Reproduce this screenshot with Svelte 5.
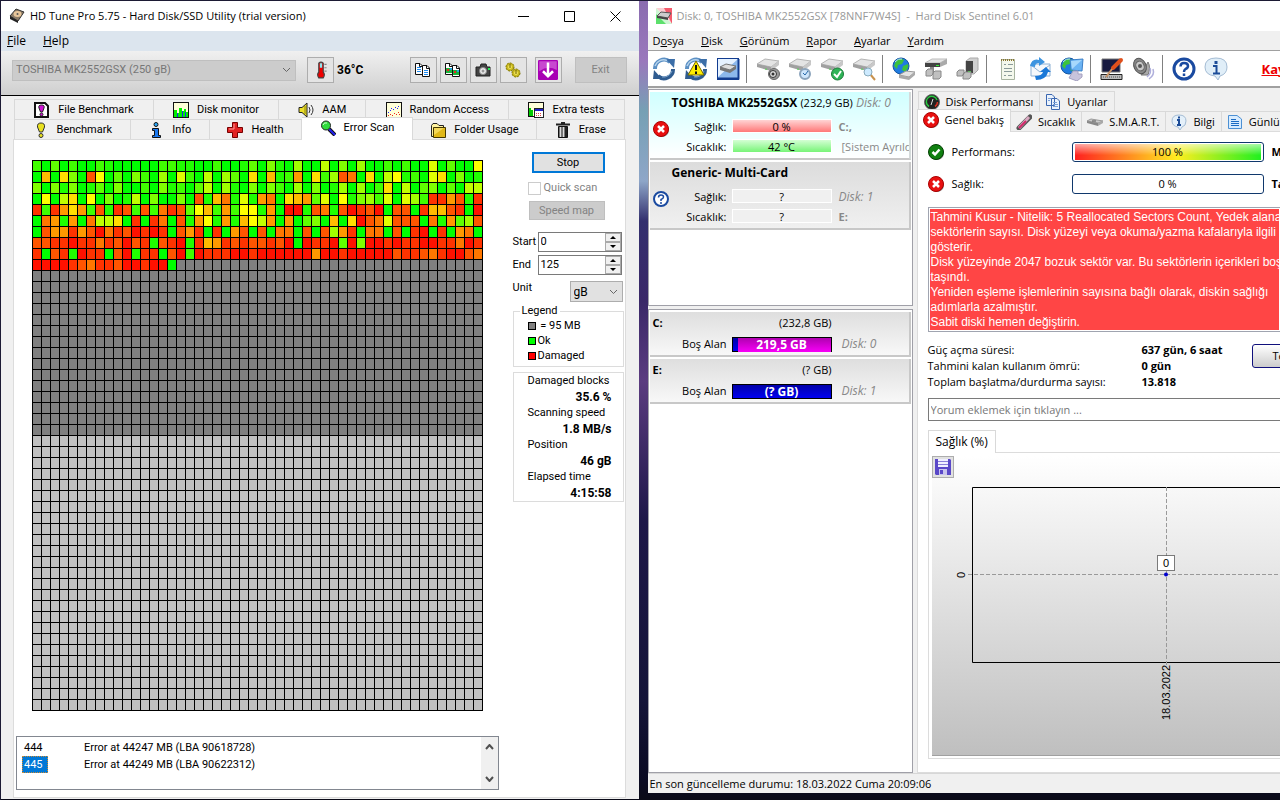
<script>
    // one hex digit per scanned block, 0 = fast (green), f = damaged (red)
    const scanRows = [
        '20302002100000221100200130410500604050020200703008',
        '0a0940d8030420507206053090a12b0925dc09068120790401',
        '40414013040020412036051040420504015050290603403066',
        '080690804016040040d1ac171bc09ab3708145270752eebd1e',
        'e2eb9b2d1ed2d2ced38a2b2881b0ff1dc1dfedf0dd0eaade0f',
        '0cb1b0c6690e0ec0d1b81b1a86b0b0340a09fdc7ddd0c1b35d',
        '0dbbebdfcedfefe0dbe0e0bd0d0cc0d0d5be0cc0d0ef0e0bc0',
        'ddeefeecedfde1def1eabededdedf0feef3f4ffefeeffeecfe',
        'e0de1fee0df1ee0df2feeeffeffffffbffefffffdeedceffdc',
        'ffffedceedffeff0'
    ];
    const COLS = 50;
    const ROWS = 50;

    function cellColor(row, col) {
        const level = scanRows[row] && scanRows[row][col];
        if (level) {
            const n = parseInt(level, 16);
            if (n <= 8) return `rgb(${Math.min(n * 32, 255)}, 255, 0)`;
            return `rgb(255, ${255 - (n - 8) * 34}, 0)`;
        }
        return row < 25 ? '#808080' : '#c0c0c0';
    }

    const cells = [];
    for (let row = 0; row < ROWS; row++) {
        for (let col = 0; col < COLS; col++) {
            cells.push({ x: col * 9 + 1, y: row * 11 + 1, fill: cellColor(row, col) });
        }
    }

    const tuneTabsTop = [
        { icon: 'filebench', label: 'File Benchmark' },
        { icon: 'monitor', label: 'Disk monitor' },
        { icon: 'speaker', label: 'AAM' },
        { icon: 'random', label: 'Random Access' },
        { icon: 'extra', label: 'Extra tests' }
    ];
    const tuneTabsBottom = [
        { icon: 'bench', label: 'Benchmark' },
        { icon: 'info', label: 'Info' },
        { icon: 'health', label: 'Health' },
        { icon: 'search', label: 'Error Scan' },
        { icon: 'folder', label: 'Folder Usage' },
        { icon: 'trash', label: 'Erase' }
    ];
    const tuneStats = [
        { label: 'Damaged blocks', value: '35.6 %' },
        { label: 'Scanning speed', value: '1.8 MB/s' },
        { label: 'Position', value: '46 gB' },
        { label: 'Elapsed time', value: '4:15:58' }
    ];
    const errors = [
        { id: 444, text: 'Error at 44247 MB (LBA 90618728)' },
        { id: 445, text: 'Error at 44249 MB (LBA 90622312)' }
    ];

    const menu = [
        ['D', 'o', 'sya'],
        ['', 'D', 'isk'],
        ['', 'G', 'örünüm'],
        ['', 'R', 'apor'],
        ['', 'A', 'yarlar'],
        ['', 'Y', 'ardım']
    ];
    const toolGroups = [
        ['refresh', 'refreshwarn', 'diskblue'],
        ['disksound', 'diskclock', 'diskcheck', 'disksearch'],
        ['globedisk', 'usb', 'usbup'],
        ['notepad', 'mail', 'network'],
        ['pen', 'horn'],
        ['help', 'bubble']
    ];
    const alertLines = [
        'Tahmini Kusur - Nitelik: 5 Reallocated Sectors Count, Yedek alana',
        'sektörlerin sayısı. Disk yüzeyi veya okuma/yazma kafalarıyla ilgili',
        'gösterir.',
        'Disk yüzeyinde 2047 bozuk sektör var. Bu sektörlerin içerikleri boş',
        'taşındı.',
        'Yeniden eşleme işlemlerinin sayısına bağlı olarak, diskin sağlığı',
        'adımlarla azalmıştır.',
        'Sabit diski hemen değiştirin.'
    ];

    let activeTuneTab = $state('Error Scan');
    let activeTab = $state('Genel bakış');
    let selectedError = $state(445);
    let start = $state(0);
    let end = $state(125);
</script>

{#snippet drive()}
    <path d="M1 7 L9 2 L23 4 L15 10 Z" fill="#e4e4e4" stroke="#b4b4b4" />
    <path d="M1 7 L15 10 V14 L1 10 Z" fill="#a0a0a0" />
    <path d="M15 10 L23 4 V8 L15 14 Z" fill="#c8c8c8" />
    <path d="M10 11.5 v1.5" stroke="#3d3" />
{/snippet}

{#snippet arrows()}
    <path d="M3 12 A9 9 0 0 1 18 5" fill="none" stroke="#5c90c4" stroke-width="4" />
    <path d="M14 2 L23 2 L22 11 Z" fill="#3b6ea8" />
    <path d="M21 12 A9 9 0 0 1 6 19" fill="none" stroke="#2f5c90" stroke-width="4" />
    <path d="M10 22 L1 22 L2 13 Z" fill="#2f5c90" />
    <path d="M3 9 A9 9 0 0 1 15 3.5" fill="none" stroke="#b8d4ec" stroke-width="1.5" />
    <path d="M20 14 A9 9 0 0 1 10 20" fill="none" stroke="#7ca4cc" />
{/snippet}

{#snippet globe()}
    <circle cx="9" cy="9" r="8" fill="#1f7be0" stroke="#1556a0" />
    <path d="M4 4 Q8 0 12 3 L10 7 L6 8 L5 12 L2 9 Z M11 9 L16 7 Q17 11 13 15 L10 13 Z" fill="#3cc23c" />
    <path d="M3 5 Q6 1 10 2" fill="none" stroke="#b8e4ff" />
{/snippet}

{#snippet icon(name, size = 16)}
    <svg class="icon" width={size} height={size} viewBox={size === 24 ? '0 0 24 24' : '0 0 16 16'} aria-hidden="true">
        {#if name === 'hdd'}
            <path d="M1 8 L7 1 L15 4 L9 13 Z" fill="#8a7a66" stroke="#333" />
            <path d="M1 8 L9 13 V15 L1 11 Z" fill="#222" />
            <ellipse cx="8.5" cy="6" rx="4" ry="3" fill="#e8c69a" />
            <circle cx="8.5" cy="6" r="1" fill="#555" />
        {:else if name === 'thermo'}
            <path d="M6 2 Q8 0 10 2 V10 Q12 12 10 15 H6 Q4 12 6 10 Z" fill="#e00" stroke="#444" />
            <path d="M7 2 H9 V6 H7 Z" fill="#8ee8f0" />
            <path d="M11 3 h2 M11 6 h2 M11 9 h2" stroke="#888" />
        {:else if name === 'copy' || name === 'copyimg'}
            <path d="M0.5 1.5 H5 L7.5 4 V12.5 H0.5 Z" fill="#fff" stroke="#111" />
            <path d="M7.5 3.5 H12 L14.5 6 V14.5 H7.5 Z" fill="#fff" stroke="#111" />
            <path d="M4.5 2 V4.500 H7 M11.5 4 V6.5 H14" fill="none" stroke="#111" />
            {#if name === 'copy'}
                <path d="M2 5.5 H6 M2 7.5 H6 M2 9.5 H6 M9 8.5 H13 M9 10.5 H13 M9 12.5 H13" stroke="#1e8bf0" />
            {:else}
                <path d="M1 6 H7 V11 H1 Z M8 8 H14 V13 H8 Z" fill="#18b33a" />
                <path d="M2 7 H4 V9 H2 Z M9 9 H11 V11 H9 Z" fill="#e22" />
                <path d="M5 6 H7 V8 H5 Z M12 8 H14 V10 H12 Z" fill="#2ad" />
            {/if}
        {:else if name === 'camera'}
            <path d="M1 5 H5 L6 2 H11 L12 5 H15 V14 H1 Z" fill="#444" stroke="#222" />
            <circle cx="8" cy="9" r="3.5" fill="#eee" stroke="#888" />
            <circle cx="8" cy="9" r="1.5" fill="#999" />
            <path d="M13 6 h2 v2 h-2 Z" fill="#2e5" />
        {:else if name === 'gears'}
            <circle cx="5" cy="5" r="4" fill="#c8b820" stroke="#7c7200" stroke-dasharray="2 1" />
            <circle cx="11" cy="11" r="4" fill="#c8b820" stroke="#7c7200" stroke-dasharray="2 1" />
            <circle cx="5" cy="5" r="2" fill="#f0e458" />
            <circle cx="11" cy="11" r="2" fill="#f0e458" />
            <path d="M5 2 V6 M11 8 V12" stroke="#6c6200" />
        {:else if name === 'down'}
            <rect width="16" height="16" rx="1" fill="#a800b4" />
            <path d="M1 1 H15 V8 Q8 4 1 9 Z" fill="#c848d0" />
            <path d="M8 2 V12 M4 9 L8 13 L12 9" fill="none" stroke="#fff" stroke-width="2" />
        {:else if name === 'filebench'}
            <path d="M1 1 H11 L14 4 V15 H1 Z" fill="#fff" stroke="#111" stroke-width="2" />
            <path d="M7.5 3 Q11 3 10 6 L8.5 10 H6.5 L5 6 Q4 3 7.5 3 Z" fill="#d010d8" stroke="#222" />
            <circle cx="7.5" cy="12.5" r="1.5" fill="#d010d8" stroke="#222" />
        {:else if name === 'monitor'}
            <rect x="0.5" y="0.5" width="15" height="15" fill="#ffffd8" stroke="#111" />
            <path d="M1 15 V8 H4 V11 H6 V6 H9 V9 H11 V7 H13 V10 H15 V15 Z" fill="#0e0" />
            <path d="M4 11 h1 v4 h-1 Z M9 9 h1 v6 h-1 Z M12 10 h1 v5 h-1 Z" fill="#22e" />
        {:else if name === 'speaker'}
            <path d="M1 5.5 H4 L9 1 V15 L4 10.5 H1 Z" fill="#ecdf28" stroke="#222" />
            <path d="M7 4 V12" stroke="#8c8410" />
            <path d="M11 5 Q13 8 11 11 M13 3 Q17 8 13 13" fill="none" stroke="#333" />
        {:else if name === 'random'}
            <rect x="0.5" y="0.5" width="15" height="15" fill="#ffffd8" stroke="#111" />
            <path d="M2 10.5 h1 M4 8.5 h1 M5 6.5 h1 M7 7.5 h1 M9 5.5 h1 M11 6.5 h1 M12 4.5 h1" stroke="#22f" />
            <path d="M2 13.5 h1 M4 12.5 h1 M6 13.5 h1 M8 11.5 h1 M10 12.5 h1 M12 10.5 h1 M13 12.5 h1" stroke="#e22" />
        {:else if name === 'extra'}
            <rect x="0.5" y="0.5" width="15" height="14" fill="#ffffd8" stroke="#111" />
            <path d="M1 14 V6 H3 V8 H5 V14 Z" fill="#0c0" />
            <rect x="6.5" y="6.5" width="9" height="9" fill="#fff" stroke="#222" />
            <path d="M7 8 H15" stroke="#22c" stroke-width="2" />
            <path d="M8 11.5 H14 M8 13.5 H14" stroke="#d44" stroke-dasharray="1 1" />
        {:else if name === 'bench'}
            <path d="M8 1 Q12 1 11.5 5 L9.500 10 H6.5 L4.5 5 Q4 1 8 1 Z" fill="#e8e020" stroke="#333" />
            <circle cx="8" cy="13.5" r="2" fill="#e8e020" stroke="#333" />
        {:else if name === 'info'}
            <circle cx="8" cy="2.5" r="2" fill="#2aa8f8" stroke="#111" />
            <path d="M4.5 6.5 H10.5 V13.5 H12.5 V15.5 H4.5 V13.5 H6.5 V8.5 H4.5 Z" fill="#1a78f0" stroke="#111" />
        {:else if name === 'health'}
            <path d="M5.5 0.5 H10.5 V5.5 H15.5 V10.5 H10.5 V15.5 H5.5 V10.5 H0.5 V5.5 H5.5 Z" fill="#e22424" stroke="#700" />
            <path d="M7 2 V7 H2" fill="none" stroke="#f99" />
        {:else if name === 'search'}
            <path d="M9 9 L15 15" stroke="#111" stroke-width="4" />
            <path d="M9 9 L15 15" stroke="#22e" stroke-width="2" />
            <circle cx="6" cy="5.5" r="4.5" fill="#2fdc3c" stroke="#222" />
            <path d="M3 5 Q4 2 7 3" fill="none" stroke="#cfc" />
        {:else if name === 'folder'}
            <path d="M1.5 3.5 L3 1.5 H7 L9 3.5 H13.5 V14.5 H1.5 Z" fill="#fff3a0" stroke="#222" />
            <path d="M3.5 5.5 H15.5 V15.5 H3.5 Z" fill="#e0b818" stroke="#443800" />
            <path d="M4 6 H14 L4 13 Z" fill="#f4d858" />
        {:else if name === 'trash'}
            <path d="M1 2.5 H15 M6 1 H10" stroke="#222" stroke-width="2" />
            <path d="M3.5 4.5 H12.5 V15.5 H3.5 Z" fill="#777" stroke="#111" />
            <path d="M5.5 5 V15 M8.5 5 V15" stroke="#ddd" />
            <path d="M11 5 V15" stroke="#222" stroke-width="2" />
        {:else if name === 'sentinel'}
            <path d="M0 0 H16 V16 Z" fill="#f45a6c" />
            <path d="M0 0 L16 16 H0 Z" fill="#5ce06c" />
            <path d="M0 0 H8 L16 16 H10 L0 6 Z" fill="#fff" opacity="0.7" />
            <path d="M1 8 L5 4 L15 5 L12 10 Z" fill="#ccc" stroke="#555" />
            <path d="M1 8 L12 10 V12 L1 10 Z" fill="#444" />
        {:else if name === 'refresh'}
            {@render arrows()}
        {:else if name === 'refreshwarn'}
            {@render arrows()}
            <path d="M12 4 L20 18 H4 Z" fill="#ffee00" stroke="#776a00" />
            <path d="M12 8 V13 M12 14.5 V17" stroke="#111" stroke-width="2" />
        {:else if name === 'diskblue'}
            <rect x="1.5" y="1.5" width="21" height="21" fill="#8cb8ec" stroke="#123c90" />
            <path d="M2 2 H22 L2 20 Z" fill="#e6f2ff" />
            <path d="M2 21.5 H22.5 V2" fill="none" stroke="#123c90" stroke-width="2" />
            <path d="M4 10 L10 7 L20 9 L14 13 Z" fill="#ddd" stroke="#777" />
            <path d="M4 10 L14 13 V16 L4 13 Z M14 13 L20 9 V12 L14 16 Z" fill="#777" />
        {:else if name === 'disksound'}
            {@render drive()}
            <circle cx="18" cy="17" r="5.5" fill="#999" stroke="#666" />
            <circle cx="17" cy="17" r="3.5" fill="#ddd" stroke="#333" />
            <circle cx="17" cy="17" r="1.5" fill="#333" />
        {:else if name === 'diskclock'}
            {@render drive()}
            <circle cx="17" cy="17" r="5" fill="#cfe6fb" stroke="#8ca4bc" stroke-width="2" />
            <path d="M20 14 L17 18 L15 16" fill="none" stroke="#2567a8" />
        {:else if name === 'diskcheck'}
            {@render drive()}
            <circle cx="17.5" cy="17" r="6" fill="#2fb457" stroke="#1a7a38" />
            <path d="M14 17 L17 20 L21 14" fill="none" stroke="#fff" stroke-width="2" />
        {:else if name === 'disksearch'}
            {@render drive()}
            <path d="M18 17 L23 23" stroke="#c8924e" stroke-width="2" />
            <circle cx="16" cy="15" r="4" fill="#cdeaff" stroke="#8ab" />
        {:else if name === 'globedisk'}
            {@render globe()}
            <path d="M7 18 L14 14 L23 15 L17 20 Z" fill="#e4e4e4" stroke="#999" />
            <path d="M7 18 L17 20 V23 L7 21 Z M17 20 L23 15 V18 L17 23 Z" fill="#aaa" />
        {:else if name === 'usb'}
            <path d="M1 6 L8 2 H23 L16 6 Z" fill="#e4e4e4" stroke="#bbb" />
            <path d="M1 6 H16 V10 H1 Z" fill="#444" />
            <path d="M16 6 L23 2 V7 L16 10 Z" fill="#aaa" />
            <path d="M12 8.5 h3" stroke="#3e3" />
            <path d="M6 10 H10 V15 H6 Z" fill="#888" />
            <path d="M2 14 L4 12 H9 V17 L7 19 H2 Z M9 16 L11 14 H17 V20 L15 22 H9 Z" fill="#c0c0c0" stroke="#888" />
        {:else if name === 'usbup'}
            <path d="M10 4 L14 1 H22 V13 L18 17 H10 Z" fill="#d0d0d0" stroke="#aaa" />
            <path d="M10 4 H17 V16 H10 Z" fill="#444" />
            <path d="M12 14.5 h3" stroke="#3e3" />
            <path d="M1 15 L3 13 H8 V17 L6 19 H1 Z M7 17 L9 15 H15 V20 L13 22 H7 Z" fill="#c0c0c0" stroke="#888" />
        {:else if name === 'notepad'}
            <path d="M5.5 2.5 H18.5 V22.5 H5.5 Z" fill="#f4f8ec" stroke="#a8b4a0" />
            <path d="M5 3 H19" stroke="#8a7430" stroke-width="2" stroke-dasharray="1 1" />
            <path d="M8 7.5 H10 M12 7.5 H17 M8 11.5 H16 M8 14.5 H16 M8 18.5 H10 M12 18.5 H16" stroke="#8a9a9a" />
        {:else if name === 'mail'}
            <path d="M3 7 H22 V19 H3 Z" fill="#f4f8fc" stroke="#8cb0d4" />
            <path d="M3 8 L12 15 L22 8" fill="none" stroke="#8cb0d4" />
            <path d="M2 9 Q4 1 11 3 V0 L17 5 L11 9 V6 Q7 6 7 10 Z" fill="#3c94e0" />
            <path d="M7 19 Q14 19 15 15 H12 L18 10 L23 15 H20 Q18 23 8 23 Z" fill="#1a78d8" />
        {:else if name === 'network'}
            {@render globe()}
            <path d="M10 3 L23 2 L22 14 L11 13 Z" fill="#6cb4f4" stroke="#3c80c8" />
            <path d="M11 4 L22 3 L12 12 Z" fill="#a8d8fc" />
            <path d="M13 14 h5 v3 h4 v3 L17 24 L9 21 Z" fill="#c8c4dc" stroke="#a4a0c0" />
        {:else if name === 'pen'}
            <path d="M2 2 H20 V15 H2 Z" fill="#171a40" stroke="#777" />
            <path d="M1 17.5 H22 V22.5 H1 Z" fill="#bbb" stroke="#222" />
            <path d="M3 20 H20" stroke="#555" stroke-dasharray="1 1" />
            <path d="M13 11 L21 3" stroke="#e0501c" stroke-width="4" stroke-linecap="round" />
            <path d="M6 20 L12 12" stroke="#c89468" stroke-width="2" />
        {:else if name === 'horn'}
            <path d="M9 18 L16 5 Q19 10 16 18 Z" fill="#aaa" stroke="#777" />
            <ellipse cx="8" cy="9" rx="6" ry="8" fill="#888" stroke="#555" transform="rotate(-25 8 9)" />
            <ellipse cx="8" cy="9" rx="4" ry="5" fill="#c8c8c8" stroke="#666" transform="rotate(-25 8 9)" />
            <circle cx="8" cy="9" r="2" fill="#555" />
            <path d="M18 11 Q20 16 15 20 M21 12 Q23 18 17 22" fill="none" stroke="#b0b0dc" stroke-width="1.5" />
        {:else if name === 'help'}
            <circle cx="12" cy="12" r="10" fill="#fff" stroke="#1a4aa0" stroke-width="3" />
            <path d="M8.5 9.5 Q8.5 6 12 6 Q16 6 16 9 Q16 11 13.5 12 Q12 13 12 15 M12 16.5 V19" fill="none" stroke="#1a4aa0" stroke-width="2.5" />
        {:else if name === 'bubble'}
            <path d="M12 1 Q23 1 23 10 Q23 17 16 19 L14 23 L11 19 Q1 18 1 10 Q1 1 12 1 Z" fill="#e0eef8" stroke="#a4bcd4" />
            <path d="M12 4 V7" stroke="#1c4c98" stroke-width="3" />
            <path d="M9 9 H12.5 V16 M9 16.5 H16" fill="none" stroke="#1c4c98" stroke-width="2" />
        {:else if name === 'bubble16'}
            <path d="M8 1 Q15 1 15 7 Q15 12 11 13 L9 16 L7 13 Q1 12 1 7 Q1 1 8 1 Z" fill="#e4f0fa" stroke="#a4bcd4" />
            <path d="M8 2.5 V4.5 M6 6 H8 V11 M6 11 H10" fill="none" stroke="#1c4c98" stroke-width="2" />
        {:else if name === 'gauge'}
            <circle cx="8" cy="8" r="7.5" fill="#222" stroke="#666" />
            <path d="M5 12.500 A5.500 5.500 0 1 1 13 6" fill="none" stroke="#28c840" stroke-width="1.5" />
            <path d="M13.500 8 A5.500 5.500 0 0 1 11 12.500" fill="none" stroke="#e03020" stroke-width="1.5" />
            <path d="M7 11 L9 5" stroke="#ddd" />
        {:else if name === 'pages'}
            <path d="M1.5 0.5 H7 L9.5 3 V11.5 H1.5 Z M6.5 4.5 H12 L14.5 7 V15.5 H6.5 Z" fill="#eaf2fc" stroke="#3a66b0" />
            <path d="M3 4.5 H6 M3 6.5 H5 M8 8.5 H12 M8 10.5 H13 M8 12.5 H13" stroke="#7aa0d8" />
        {:else if name === 'probe'}
            <path d="M3 14 L14 3" stroke="#555" stroke-width="5" stroke-linecap="round" />
            <path d="M3 14 L13 3" stroke="#d8a8c0" stroke-width="3" />
            <path d="M3 14 L10 7" stroke="#d02868" stroke-width="2" />
        {:else if name === 'smart'}
            <path d="M0 7 L4 5 L16 7 L11 9 Z" fill="#ccc" stroke="#999" />
            <path d="M0 7 L11 9 V12 L0 9 Z" fill="#888" />
            <path d="M11 9 L16 7 V9 L11 12 Z" fill="#aaa" />
            <path d="M5 7 h4" stroke="#555" />
        {:else if name === 'log'}
            <path d="M1.5 1.5 H10 L14.5 5 V14.5 H1.5 Z" fill="#d8ecff" stroke="#4c90d4" />
            <path d="M4 5.5 H9 M4 7.5 H12 M4 9.5 H12 M4 11.5 H12" stroke="#1c6cc4" />
        {:else if name === 'bad'}
            <circle cx="9" cy="9" r="7" fill="#888" />
            <circle cx="8" cy="8" r="7.5" fill="#e81010" stroke="#a00" />
            <path d="M5 5 L11 11 M11 5 L5 11" stroke="#fff" stroke-width="2.5" />
        {:else if name === 'good'}
            <circle cx="9" cy="9" r="7" fill="#888" />
            <circle cx="8" cy="8" r="7.5" fill="#108010" stroke="#044004" />
            <path d="M4.500 8 L7 10.5 L11.5 5.5" fill="none" stroke="#fff" stroke-width="2.5" />
        {:else if name === 'unknown'}
            <circle cx="8" cy="8" r="7" fill="#fff" stroke="#1a4aa0" stroke-width="2" />
            <path d="M5.5 6.5 Q5.5 4 8 4 Q10.5 4 10.5 6 Q10.5 7.5 8 8.5 V10 M8 11 V13" fill="none" stroke="#1a4aa0" stroke-width="1.5" />
        {:else if name === 'floppy'}
            <path d="M0 0 H15 L16 1 V16 H1 L0 15 Z" fill="#5a48c8" />
            <path d="M3 0 H13 V8 H3 Z" fill="#f0f0ff" />
            <path d="M3 2.5 H13 M3 5.5 H13" stroke="#8a80d8" />
            <path d="M4 10 H12 V16 H4 Z" fill="#c8c4ec" />
            <path d="M5 11 H8 V15 H5 Z" fill="#5a48c8" />
        {/if}
    </svg>
{/snippet}

{#snippet tuneTab(tab)}
    <button
        class="tab"
        class:active={tab.label === activeTuneTab}
        role="tab"
        aria-selected={tab.label === activeTuneTab}
        onclick={() => (activeTuneTab = tab.label)}
    >
        {@render icon(tab.icon)}
        <span>{tab.label}</span>
    </button>
{/snippet}

{#snippet sentTab(name, label)}
    <button
        class="tab"
        class:active={label === activeTab}
        role="tab"
        aria-selected={label === activeTab}
        onclick={() => (activeTab = label)}
    >
        {@render icon(name)}
        <span>{label}</span>
    </button>
{/snippet}

<div class="desktop">
    <section class="window tune">
        <header class="titlebar">
            {@render icon('hdd')}
            <h1>HD Tune Pro 5.75 - Hard Disk/SSD Utility (trial version)</h1>
            <div class="caption-buttons">
                <button aria-label="Minimize"><svg width="11" height="11"><path d="M0 5.5 H11" /></svg></button>
                <button aria-label="Maximize"><svg width="11" height="11"><path d="M0.5 0.5 H10.5 V10.5 H0.5 Z" /></svg></button>
                <button aria-label="Close"><svg width="11" height="11"><path d="M0.5 0.5 L10.5 10.5 M10.5 0.5 L0.5 10.5" /></svg></button>
            </div>
        </header>
        <nav class="menubar">
            <button><u>F</u>ile</button>
            <button><u>H</u>elp</button>
        </nav>
        <div class="tune-toolbar">
            <select class="drive-select" aria-label="Drive" disabled>
                <option>TOSHIBA MK2552GSX (250 gB)</option>
            </select>
            <button class="tool" aria-label="Temperature">{@render icon('thermo', 18)}</button>
            <strong class="temperature">36°C</strong>
            <div class="tools">
                <button class="tool" aria-label="Copy text">{@render icon('copy')}</button>
                <button class="tool" aria-label="Copy image">{@render icon('copyimg')}</button>
                <button class="tool" aria-label="Screenshot">{@render icon('camera')}</button>
                <button class="tool" aria-label="Options">{@render icon('gears')}</button>
                <button class="tool update" aria-label="Update">{@render icon('down', 20)}</button>
                <button class="exit" disabled>Exit</button>
            </div>
        </div>

        <div class="tune-body">
            <div class="tabs" role="tablist">
                {#each tuneTabsTop as tab}{@render tuneTab(tab)}{/each}
            </div>
            <div class="tabs" role="tablist">
                {#each tuneTabsBottom as tab}{@render tuneTab(tab)}{/each}
            </div>
            <div class="scan-page">
                <div class="scan-row">
                    <svg class="map" width="451" height="551" shape-rendering="crispEdges" role="img" aria-label="Block map">
                        <rect width="451" height="551" fill="#000" />
                        {#each cells as cell}
                            <rect x={cell.x} y={cell.y} width="8" height="10" fill={cell.fill} />
                        {/each}
                    </svg>
                    <div class="controls">
                        <button class="stop">Stop</button>
                        <label class="quick"><input type="checkbox" disabled /> Quick scan</label>
                        <button class="speed-map" disabled>Speed map</button>
                        <div class="range">
                            <label for="start">Start</label>
                            <span class="spin">
                                <input id="start" type="text" bind:value={start} />
                                <span class="steps">
                                    <button aria-label="Start up" onclick={() => start++}><i class="up"></i></button>
                                    <button aria-label="Start down" onclick={() => start--}><i class="down"></i></button>
                                </span>
                            </span>
                            <label for="end">End</label>
                            <span class="spin">
                                <input id="end" type="text" bind:value={end} />
                                <span class="steps">
                                    <button aria-label="End up" onclick={() => end++}><i class="up"></i></button>
                                    <button aria-label="End down" onclick={() => end--}><i class="down"></i></button>
                                </span>
                            </span>
                        </div>
                        <div class="unit">
                            <label for="unit">Unit</label>
                            <select id="unit"><option>gB</option></select>
                        </div>
                        <fieldset class="legend">
                            <legend>Legend</legend>
                            <div><i></i>&nbsp;= 95 MB</div>
                            <div><i class="ok"></i>Ok</div>
                            <div><i class="damaged"></i>Damaged</div>
                        </fieldset>
                        <dl class="stats">
                            {#each tuneStats as stat}
                                <dt>{stat.label}</dt>
                                <dd>{stat.value}</dd>
                            {/each}
                        </dl>
                    </div>
                </div>
                <div class="error-list">
                    <ul>
                        {#each errors as error}
                            <li>
                                <button class:selected={error.id === selectedError} onclick={() => (selectedError = error.id)}>{error.id}</button>
                                <span>{error.text}</span>
                            </li>
                        {/each}
                    </ul>
                    <div class="scrollbar">
                        <svg width="9" height="6"><path d="M1 5 L4.5 1 L8 5" /></svg>
                        <svg width="9" height="6"><path d="M1 1 L4.5 5 L8 1" /></svg>
                    </div>
                </div>
            </div>
        </div>
    </section>

    <section class="window sentinel">
        <header class="titlebar inactive">
            {@render icon('sentinel')}
            <h1>Disk: 0, TOSHIBA MK2552GSX [78NNF7W4S]&nbsp; -&nbsp; Hard Disk Sentinel 6.01</h1>
        </header>
        <nav class="menubar">
            {#each menu as [before, key, after]}
                <button>{before}<u>{key}</u>{after}</button>
            {/each}
        </nav>
        <div class="sent-toolbar">
            {#each toolGroups as group}
                <div class="tool-group">
                    {#each group as name}
                        <button aria-label={name}>{@render icon(name, 24)}</button>
                    {/each}
                </div>
            {/each}
            <a href="#register">Kayıt</a>
        </div>

        <div class="sent-body">
            <aside>
                <div class="list disks">
                    <article class="card current">
                        <h2>TOSHIBA MK2552GSX <span>(232,9 GB)</span> <em>Disk: 0</em></h2>
                        <div class="disk-info">
                            <span class="state">{@render icon('bad')}</span>
                            <span class="name">Sağlık:</span>
                            <span class="meter red">0 %</span>
                            <b>C:,</b>
                            <span class="name">Sıcaklık:</span>
                            <span class="meter green">42 °C</span>
                            <span class="note">[Sistem Ayrıldı]</span>
                        </div>
                    </article>
                    <article class="card">
                        <h2>Generic- Multi-Card</h2>
                        <div class="disk-info">
                            <span class="state">{@render icon('unknown')}</span>
                            <span class="name">Sağlık:</span>
                            <span class="meter">?</span>
                            <em>Disk: 1</em>
                            <span class="name">Sıcaklık:</span>
                            <span class="meter">?</span>
                            <b>E:</b>
                        </div>
                    </article>
                </div>
                <div class="list volumes">
                    <article class="card volume">
                        <div class="volume-head"><b>C:</b><span>(232,8 GB)</span></div>
                        <div class="volume-row">
                            <span class="name">Boş Alan</span>
                            <span class="space"><i style="width: 94%"></i><b>219,5 GB</b></span>
                            <em>Disk: 0</em>
                        </div>
                    </article>
                    <article class="card volume">
                        <div class="volume-head"><b>E:</b><span>(? GB)</span></div>
                        <div class="volume-row">
                            <span class="name">Boş Alan</span>
                            <span class="space"><i style="width: 0%"></i><b>(? GB)</b></span>
                            <em>Disk: 1</em>
                        </div>
                    </article>
                </div>
            </aside>

            <main>
                <div class="tabs" role="tablist">
                    {@render sentTab('gauge', 'Disk Performansı')}
                    {@render sentTab('pages', 'Uyarılar')}
                </div>
                <div class="tabs" role="tablist">
                    {@render sentTab('bad', 'Genel bakış')}
                    {@render sentTab('probe', 'Sıcaklık')}
                    {@render sentTab('smart', 'S.M.A.R.T.')}
                    {@render sentTab('bubble16', 'Bilgi')}
                    {@render sentTab('log', 'Günlük')}
                </div>
                <div class="overview">
                    <div class="rating">
                        {@render icon('good')}
                        <span>Performans:</span>
                        <span class="bar full">100 %</span>
                        <b>Maks.</b>
                    </div>
                    <div class="rating">
                        {@render icon('bad')}
                        <span>Sağlık:</span>
                        <span class="bar">0 %</span>
                        <b>Tahmini</b>
                    </div>
                    <div class="alert">
                        <div class="alert-text">
                            {#each alertLines as line}<p>{line}</p>{/each}
                        </div>
                    </div>
                    <div class="facts">
                        <dl>
                            <dt>Güç açma süresi:</dt><dd>637 gün, 6 saat</dd>
                            <dt>Tahmini kalan kullanım ömrü:</dt><dd>0 gün</dd>
                            <dt>Toplam başlatma/durdurma sayısı:</dt><dd>13.818</dd>
                        </dl>
                        <button>Tekrar</button>
                    </div>
                    <input class="comment" type="text" placeholder="Yorum eklemek için tıklayın ..." aria-label="Yorum" />
                    <div class="tabs chart-tabs" role="tablist">
                        <button class="tab active" role="tab" aria-selected="true">Sağlık (%)</button>
                    </div>
                    <div class="chart-page">
                        <div class="chart">
                            <button class="save" aria-label="Kaydet">{@render icon('floppy')}</button>
                            <svg class="plot" width="100%" height="277" role="img" aria-label="Sağlık (%)">
                                <path d="M2000 9.5 H40.5 V184.5 H2000" fill="none" stroke="#000" />
                                <path d="M234.5 9 V190 M36 96.5 H2000" stroke="#999" stroke-dasharray="4 2" />
                                <rect x="225.5" y="77.5" width="17" height="15" fill="#fff" stroke="#000" stroke-dasharray="1 1" />
                                <text x="234" y="89" text-anchor="middle">0</text>
                                <circle cx="234" cy="96.5" r="2" fill="#00c" />
                                <text transform="translate(33 97) rotate(-90)" text-anchor="middle">0</text>
                                <text transform="translate(238 242) rotate(-90)">18.03.2022</text>
                            </svg>
                        </div>
                    </div>
                </div>
            </main>
        </div>
        <footer>En son güncelleme durumu: 18.03.2022 Cuma 20:09:06</footer>
    </section>
</div>

<style>
    :global(body) {
        overflow: hidden;
        background: #0b0b20;
    }

    * {
        box-sizing: border-box;
    }

    button,
    input,
    select {
        font: inherit;
        color: inherit;
    }

    button {
        padding: 0;
        border: none;
        background: none;
    }

    .icon {
        flex: none;
        display: block;
    }

    .desktop {
        display: flex;
        align-items: flex-start;
        gap: 9px;
        min-height: 100vh;
        border: 1px solid #1c1a34;
        border-width: 1px 0 0 1px;
        background: linear-gradient(#8a6cb0 0, #9a78bc 60px, #76a0b4 110px, #8ea6c8 180px, #33306e 220px, #3a2868 300px, #5b3c80 380px, #1d1748 520px, #141438 700px, #0a0a22 780px, #0a0a18 100%);
    }

    .window {
        display: flex;
        flex-direction: column;
        min-width: 0;
        background: #f0f0f0;
        color: #000;
        font: 11px/16px "Open Sans", "Noto Sans", sans-serif;
        white-space: nowrap;
        overflow: hidden;
    }

    .tune {
        flex: 0 0 calc(50% - 2px);
    }

    .sentinel {
        flex: 1;
    }

    .titlebar {
        display: flex;
        align-items: center;
        gap: 5px;
        height: 30px;
        padding-left: 8px;
        background: #fff;
    }

    .titlebar h1 {
        margin: 0;
        font-size: 11px;
        font-weight: 400;
    }

    .titlebar.inactive {
        color: #999;
    }

    .caption-buttons {
        display: flex;
        margin-left: auto;
    }

    .caption-buttons button {
        display: grid;
        place-items: center;
        width: 46px;
        height: 30px;
    }

    .caption-buttons path {
        fill: none;
        stroke: #000;
    }

    .menubar {
        display: flex;
        gap: 17px;
        height: 20px;
    }

    .tune .menubar {
        padding-left: 6px;
        background: #dce5ee;
        font-size: 12px;
    }

    .sentinel .menubar {
        padding-left: 5px;
        border-bottom: 1px solid #a0a0a0;
    }

    /* HD Tune */

    .tune-toolbar {
        display: flex;
        align-items: center;
        height: 45px;
        padding: 0 12px 6px 11px;
        border-bottom: 1px solid #000;
        background: linear-gradient(#f0f0f0, #cfcfcf);
        font: 11px/14px Roboto, "Liberation Sans", sans-serif;
    }

    select {
        appearance: none;
        border: 1px solid #adadad;
        border-radius: 0;
        padding: 0 3px;
        background: #e1e1e1 url("data:image/svg+xml,%3Csvg xmlns='http://www.w3.org/2000/svg' width='9' height='6'%3E%3Cpath d='M1 1 L4.5 4.5 L8 1' fill='none' stroke='%23666'/%3E%3C/svg%3E") no-repeat right 4px center;
    }

    .drive-select {
        flex: 0 1 284px;
        height: 21px;
        margin-right: 11px;
        border-color: #bfbfbf;
        background-color: #ccc;
        color: #777;
        opacity: 1;
    }

    .tool {
        display: grid;
        place-items: center;
        width: 27px;
        height: 26px;
        border: 1px solid #adadad;
        background: #e4e4e4;
    }

    .temperature {
        margin-left: 3px;
        font-size: 12px;
    }

    .tools {
        display: flex;
        gap: 3px;
        margin-left: auto;
    }

    .update {
        margin-left: 5px;
    }

    .exit {
        width: 52px;
        margin-left: 10px;
        border: 1px solid #bfbfbf;
        background: #ccc;
        color: #838383;
    }

    .tune-body {
        padding: 3px 13px 1px 12px;
        font: 11px/14px Roboto, "Liberation Sans", sans-serif;
    }

    .tabs {
        display: flex;
    }

    .tab {
        display: flex;
        align-items: center;
        justify-content: center;
        height: 20px;
        border: 1px solid #d9d9d9;
        border-width: 1px 1px 0 0;
        background: #f0f0f0;
    }

    .tab:first-child {
        border-left-width: 1px;
    }

    .tab.active {
        height: 23px;
        margin: -2px 0 -1px;
        padding-bottom: 3px;
        background: #fff;
        z-index: 1;
    }

    .tune .tab {
        flex: 1 1 auto;
        gap: 8px;
    }

    .tune .tabs {
        padding: 0 1px;
    }

    .scan-page {
        padding: 20px 1px 7px 2px;
        border: 1px solid #dcdcdc;
        background: #fff;
    }

    .scan-row {
        display: flex;
        align-items: flex-start;
        padding-left: 16px;
    }

    .map {
        flex: none;
    }

    .controls {
        display: flex;
        flex-direction: column;
        width: 111px;
        margin: -8px 0 0 auto;
    }

    .stop {
        width: 73px;
        height: 21px;
        margin-left: 19px;
        border: 2px solid #0078d7;
        background: #e1e1e1;
    }

    .quick {
        display: flex;
        align-items: center;
        gap: 3px;
        height: 14px;
        margin: 8px 0 6px 15px;
        color: #838383;
    }

    .quick input {
        appearance: none;
        width: 13px;
        height: 13px;
        margin: 0;
        border: 1px solid #ccc;
        background: #fff;
    }

    .speed-map {
        width: 76px;
        height: 19px;
        margin-left: 16px;
        border: 1px solid #bfbfbf;
        background: #ccc;
        color: #838383;
    }

    .range {
        display: grid;
        grid-template-columns: 25px minmax(0, 1fr);
        align-items: center;
        gap: 3px 0;
        margin-top: 12px;
    }

    .spin {
        display: flex;
        height: 20px;
        margin-right: 2px;
        border: 1px solid #7a7a7a;
    }

    .spin input {
        flex: 1;
        min-width: 0;
        padding: 0 2px;
        border: none;
        outline: none;
        background: #fff;
    }

    .steps {
        display: flex;
        flex-direction: column;
        width: 16px;
    }

    .steps button {
        display: grid;
        place-items: center;
        flex: 1;
        border: 1px solid #aaa;
        background: #f0f0f0;
    }

    .steps i {
        border: 3px solid transparent;
    }

    .steps .up {
        border-top-width: 0;
        border-bottom-color: #000;
    }

    .steps .down {
        border-bottom-width: 0;
        border-top-color: #000;
    }

    .unit {
        display: flex;
        justify-content: space-between;
        margin: 6px 1px 0 0;
    }

    .unit select {
        width: 53px;
        height: 21px;
        font-size: 12px;
    }

    .legend {
        min-width: 0;
        margin: 2px 0 5px;
        padding: 0 0 3px 14px;
        border: 1px solid #dcdcdc;
        line-height: 14px;
    }

    .legend legend {
        margin-left: -8px;
        padding: 0 2px;
    }

    .legend div {
        display: flex;
        align-items: center;
        gap: 2px;
        height: 15px;
    }

    .legend i {
        width: 8px;
        height: 8px;
        border: 1px solid #000;
        background: #808080;
    }

    .legend .ok {
        background: #0f0;
    }

    .legend .damaged {
        background: #f00;
    }

    .stats {
        margin: 0;
        padding: 0 11px 0 14px;
        border: 1px solid #dcdcdc;
    }

    .stats dt {
        height: 16px;
        line-height: 16px;
    }

    .stats dd {
        height: 16px;
        margin: 0;
        font-size: 12px;
        line-height: 16px;
        font-weight: 700;
        text-align: right;
    }

    .error-list {
        display: flex;
        width: 483px;
        height: 54px;
        margin-top: 25px;
        border: 1px solid #828790;
    }

    .error-list ul {
        flex: 1;
        margin: 0;
        padding: 2px 0 0 5px;
        list-style: none;
    }

    .error-list li {
        display: flex;
        align-items: center;
        height: 17px;
    }

    .error-list li button {
        width: 26px;
        height: 17px;
        margin-right: 36px;
        padding-left: 2px;
        text-align: left;
    }

    .error-list .selected {
        outline: 1px dotted #d08a30;
        outline-offset: -1px;
        background: #0078d7;
        color: #fff;
    }

    .scrollbar {
        display: flex;
        flex-direction: column;
        align-items: center;
        justify-content: space-between;
        width: 17px;
        padding: 7px 0;
        background: #f0f0f0;
    }

    .scrollbar path {
        fill: none;
        stroke: #505050;
        stroke-width: 2;
    }

    /* Hard Disk Sentinel */

    .sent-toolbar {
        display: flex;
        align-items: center;
        height: 37px;
        border-bottom: 2px solid #a0a0a0;
        background: #fff;
    }

    .tool-group {
        display: flex;
        flex: none;
    }

    .tool-group button {
        display: grid;
        place-items: center;
        width: 32px;
        height: 32px;
    }

    .tool-group + .tool-group {
        padding-left: 2px;
    }

    .tool-group + .tool-group::before {
        content: "";
        width: 1px;
        height: 28px;
        margin: 2px 5px 0 0;
        background: #808080;
    }

    .sent-toolbar a {
        margin-left: 30px;
        color: #e00;
        font-size: 13px;
        font-weight: 700;
    }

    .sent-body {
        display: flex;
        gap: 4px;
        padding-top: 1px;
    }

    aside {
        display: flex;
        flex: none;
        flex-direction: column;
        gap: 3px;
        width: 265px;
    }

    .list {
        padding: 2px 1px;
        border: 1px solid #a0a0a8;
        background: #fff;
    }

    .disks {
        height: 217px;
    }

    .volumes {
        flex: 1;
    }

    .card {
        height: 68px;
        margin-bottom: 2px;
        padding: 3px 0 0 3px;
        border-right: 2px solid #c8c8c8;
        border-bottom: 2px solid #c8c8c8;
        background: linear-gradient(#dcdcdc, #f0f0f0);
        overflow: hidden;
    }

    .card.current {
        border-right-color: #d4dada;
        background: linear-gradient(#d0ffff, #fff);
    }

    .card h2 {
        margin: 0 0 8px 19px;
        font-size: 12px;
        line-height: 16px;
        font-weight: 700;
    }

    .card h2 span {
        font-size: 11px;
        font-weight: 400;
    }

    .card em,
    .note,
    .disk-info b {
        color: #888;
    }

    .card em {
        font-size: 12px;
        font-weight: 400;
    }

    .disk-info {
        display: grid;
        grid-template-columns: 20px 54px 105px 1fr;
        row-gap: 4px;
        line-height: 16px;
    }

    .state {
        grid-row: span 2;
        padding-top: 2px;
    }

    .name {
        text-align: right;
    }

    .meter {
        height: 14px;
        margin-left: 5px;
        border: 1px solid #fff;
        background: #f0f0f0;
        line-height: 14px;
        text-align: center;
    }

    .meter.red {
        background: linear-gradient(#ffd4d4, #ff7878);
    }

    .meter.green {
        background: linear-gradient(#d4ffd4, #78f478);
    }

    .disk-info .meter + * {
        padding-left: 7px;
    }

    .disk-info .meter + .note {
        padding-left: 10px;
    }

    .card.volume {
        height: 45px;
        background: linear-gradient(#dedede, #f8f8f8);
    }

    .volume-head {
        display: flex;
        justify-content: space-between;
        width: 179px;
        margin-bottom: 5px;
    }

    .volume-row {
        display: grid;
        grid-template-columns: 74px 105px 1fr;
        align-items: center;
    }

    .space {
        display: grid;
        height: 15px;
        margin-left: 5px;
        border: 1px solid #000;
        background: linear-gradient(#0000a8, #0000f0);
        color: #fff;
        font-size: 12px;
        line-height: 14px;
        text-align: center;
    }

    .space i {
        grid-area: 1 / 1;
        justify-self: end;
        background: linear-gradient(#b000b0, #f800f8);
    }

    .space b {
        grid-area: 1 / 1;
    }

    .volume-row em {
        padding-left: 10px;
    }

    main {
        flex: 1;
        min-width: 0;
        padding-top: 2px;
        overflow: hidden;
    }

    main .tabs {
        padding-left: 1px;
    }

    main .tab {
        flex: none;
        gap: 6px;
        padding: 0 6px 0 5px;
    }

    main .tab.active {
        margin-left: -1px;
        padding-bottom: 3px;
    }

    .overview {
        padding: 10px 0 13px 10px;
        border: 1px solid #dcdcdc;
        border-right: none;
        background: #fff;
    }

    .rating {
        display: grid;
        grid-template-columns: 16px 112px 192px 1fr;
        align-items: center;
        column-gap: 8px;
        height: 20px;
        margin-bottom: 12px;
    }

    .rating .bar {
        height: 20px;
        border: 1px solid #10386c;
        border-radius: 3px;
        line-height: 18px;
        text-align: center;
    }

    .rating .full {
        padding: 1px 2px;
        line-height: 16px;
        background: linear-gradient(rgba(255, 255, 255, 0.6), rgba(255, 255, 255, 0) 70%) content-box, linear-gradient(90deg, #ff2020, #ffee20 55%, #20f020) content-box;
    }

    .alert {
        padding: 1px;
        border: 1px solid #a0a4b0;
        border-right: none;
        margin: 13px 0 10px;
    }

    .alert-text {
        height: 121px;
        padding: 1px;
        background: #ff4545;
        color: #fff;
        font: 12px/15px "Liberation Sans", sans-serif;
        overflow: hidden;
    }

    .alert-text p {
        margin: 0;
    }

    .facts {
        display: flex;
        align-items: flex-start;
    }

    .facts dl {
        display: grid;
        flex: none;
        grid-template-columns: 214px 110px;
        margin: 0;
    }

    .facts dd {
        margin: 0;
        font-weight: 700;
    }

    .facts button {
        flex: none;
        width: 90px;
        height: 24px;
        margin-top: 2px;
        padding-left: 20px;
        border: 1px solid #10107c;
        border-radius: 3px;
        background: linear-gradient(#fff, #ccc);
        text-align: left;
    }

    .comment {
        display: block;
        width: 100%;
        height: 23px;
        margin: 8px 0 9px;
        padding: 0 2px;
        border: 1px solid #7a7a7a;
        border-right: none;
    }

    .comment::placeholder {
        color: #777;
    }

    .chart-tabs.tabs {
        padding: 0;
    }

    .chart-tabs .tab.active {
        height: 23px;
        margin: 0 0 -1px;
        padding: 0 7px;
        font-size: 12px;
    }

    .chart-page {
        padding: 3px 0 2px 3px;
        border: 1px solid #dcdcdc;
        border-right: none;
    }

    .chart {
        border-bottom: 1px solid #a0a0a0;
        background: linear-gradient(#fff, #bfbfbf);
    }

    .save {
        display: grid;
        place-items: center;
        width: 22px;
        height: 22px;
        border: 1px solid #adadad;
        background: #e1e1e1;
    }

    .plot {
        display: block;
    }

    .plot text {
        font: 11px "Liberation Sans", sans-serif;
    }

    footer {
        height: 20px;
        padding-left: 2px;
        border-top: 1px solid #d7d7d7;
        line-height: 20px;
    }
</style>
